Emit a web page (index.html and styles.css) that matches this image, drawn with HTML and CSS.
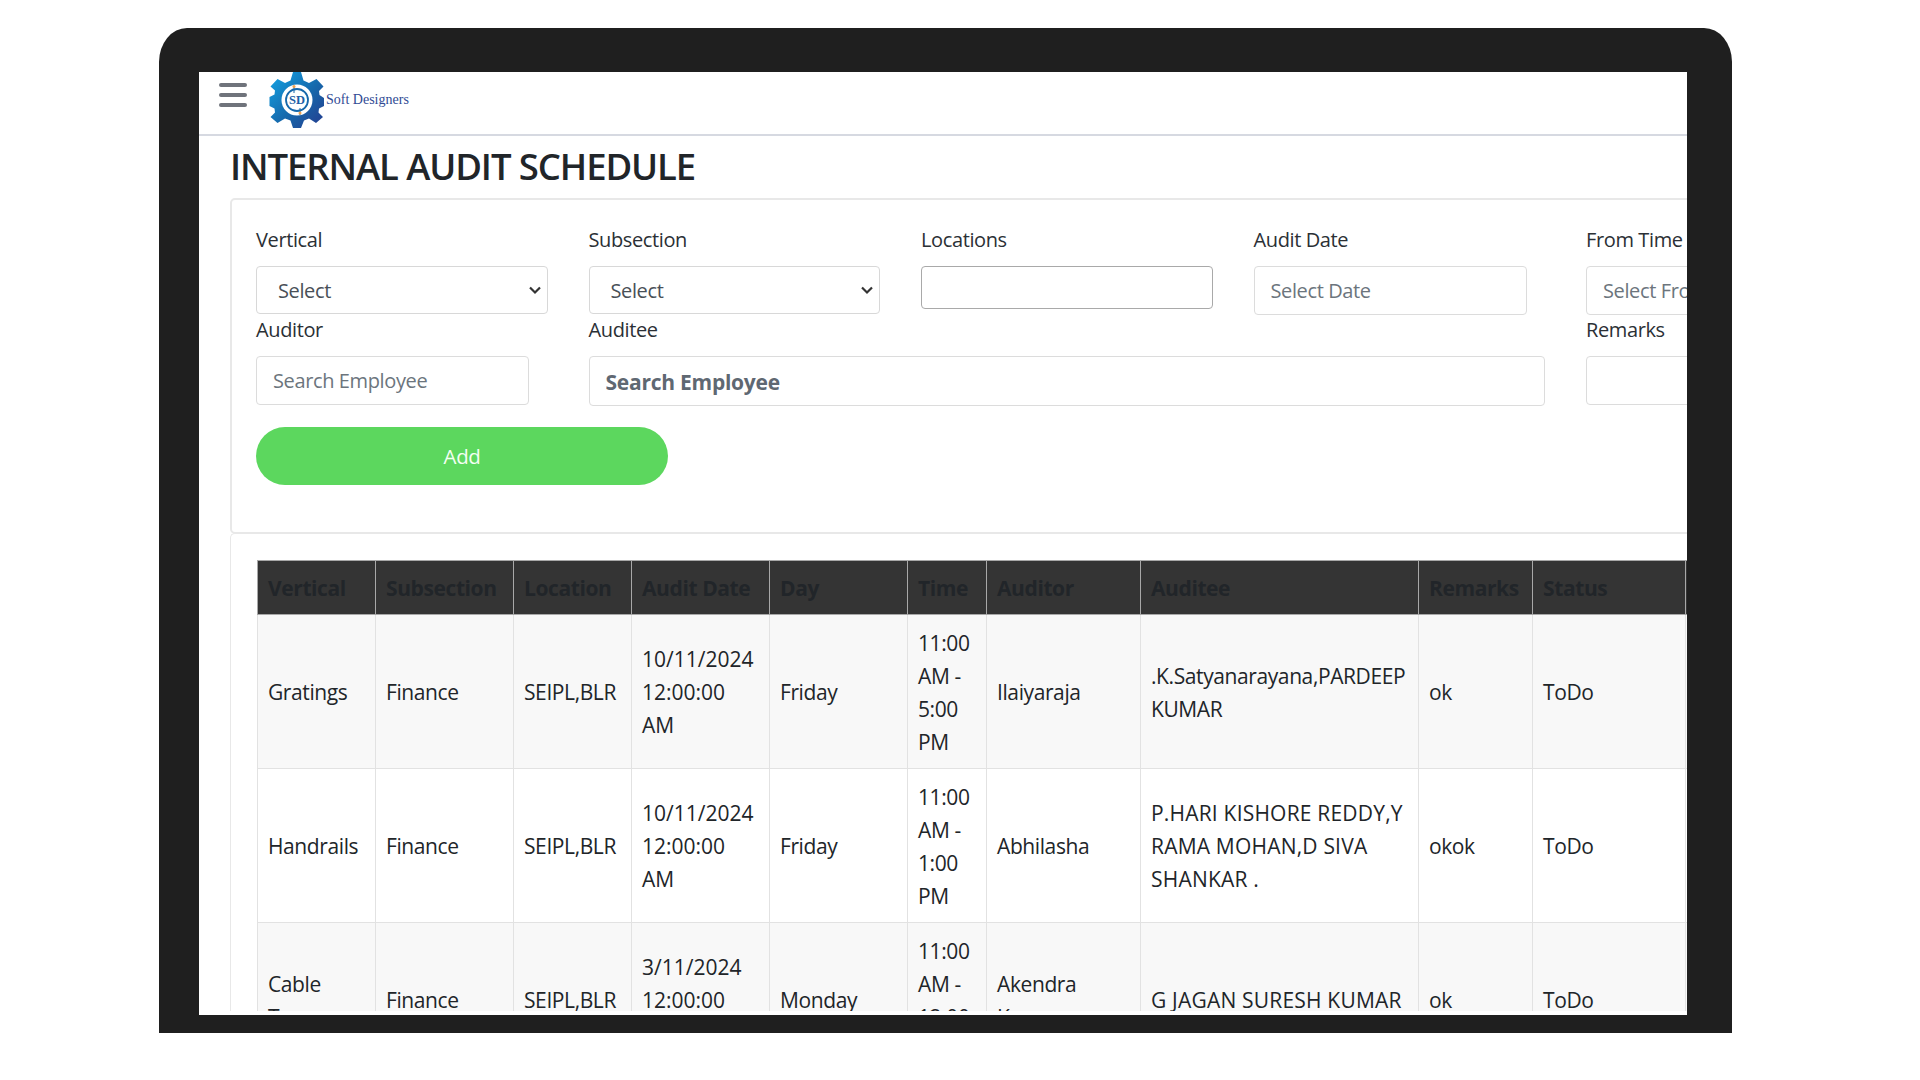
FILE: index.html
```html
<!DOCTYPE html>
<html lang="en">
<head>
<meta charset="utf-8">
<title>Internal Audit Schedule</title>
<link rel="stylesheet" href="styles.css">
</head>
<body>
<div class="device">
  <div class="screen">
    <nav class="navbar">
      <div class="burger"><span></span><span></span><span></span></div>
      <svg class="gear" viewBox="0 0 56 56" aria-hidden="true">
        <defs>
          <linearGradient id="gearFill" x1="0" y1="0" x2="1" y2="1">
            <stop offset="0" stop-color="#12a5e6"/>
            <stop offset="0.55" stop-color="#1668ab"/>
            <stop offset="1" stop-color="#253b8e"/>
          </linearGradient>
        </defs>
        <path fill="url(#gearFill)" d="M24 0H32L34.5 8.5 40 11 47.5 7 54.5 14.5 50 19 50.5 23 55 26V34L50 36.5 49.5 40.5 54 45 47 51 40 46.5 35 48.5 32 56H24L21.5 48.5 16 46.5 8.500 51 1.500 45 6 40.500 5.500 36.500 0.500 34V25L5.500 22.500 6 18.500 1.500 14.500 8.500 7 16 11 21.500 8.500Z"/>
        <circle cx="28" cy="28" r="15.500" fill="#fff"/>
        <circle cx="28" cy="28" r="11" fill="none" stroke="#1668ab" stroke-width="1.800"/>
        <path d="M25 14V21M31 36V43" stroke="#1668ab" stroke-width="1"/>
        <circle cx="25" cy="14.500" r="1.500" fill="#f0a04b"/>
        <circle cx="31" cy="41" r="1.500" fill="#f0a04b"/>
        <text x="28" y="32" class="gear-text">SD</text>
      </svg>
      <span class="brand">Soft Designers</span>
    </nav>
    <main class="content">
      <h1 class="title">INTERNAL AUDIT SCHEDULE</h1>
      <section class="card form-card">
        <form class="form-grid">
          <div class="field"><label>Vertical</label><select class="control sel"><option>Select</option></select></div>
          <div class="field"><label>Subsection</label><select class="control sel"><option>Select</option></select></div>
          <div class="field"><label>Locations</label><input class="control loc" type="text"></div>
          <div class="field narrow"><label>Audit Date</label><input class="control" placeholder="Select Date"></div>
          <div class="field"><label>From Time</label><input class="control" placeholder="Select From Time"></div>
          <div class="field narrow"><label>Auditor</label><input class="control" placeholder="Search Employee"></div>
          <div class="field wide"><label>Auditee</label><input class="control bold" placeholder="Search Employee"></div>
          <div class="field"><label>Remarks</label><input class="control" type="text"></div>
        </form>
        <button class="add" type="button">Add</button>
      </section>
      <section class="card table-card">
        <table class="grid">
          <colgroup>
            <col class="c1"><col class="c2"><col class="c3"><col class="c4"><col class="c5"><col class="c6"><col class="c7"><col class="c8"><col class="c9"><col class="c10"><col class="c11">
          </colgroup>
          <thead>
            <tr><th>Vertical</th><th>Subsection</th><th>Location</th><th>Audit Date</th><th>Day</th><th>Time</th><th>Auditor</th><th>Auditee</th><th>Remarks</th><th>Status</th><th></th></tr>
          </thead>
          <tbody>
            <tr><td>Gratings</td><td>Finance</td><td>SEIPL,BLR</td><td class="date">10/11/2024 12:00:00 AM</td><td>Friday</td><td>11:00 AM - 5:00 PM</td><td>Ilaiyaraja</td><td>.K.Satyanarayana,PARDEEP KUMAR</td><td>ok</td><td>ToDo</td><td></td></tr>
            <tr><td>Handrails</td><td>Finance</td><td>SEIPL,BLR</td><td class="date">10/11/2024 12:00:00 AM</td><td>Friday</td><td>11:00 AM - 1:00 PM</td><td>Abhilasha</td><td class="caps">P.HARI KISHORE REDDY,Y RAMA MOHAN,D SIVA SHANKAR .</td><td>okok</td><td>ToDo</td><td></td></tr>
            <tr><td>Cable Tray</td><td>Finance</td><td>SEIPL,BLR</td><td class="date">3/11/2024 12:00:00 AM</td><td>Monday</td><td>11:00 AM - 12:00 PM</td><td>Akendra Kumar</td><td class="caps">G JAGAN SURESH KUMAR</td><td>ok</td><td>ToDo</td><td></td></tr>
          </tbody>
        </table>
      </section>
    </main>
  </div>
</div>
</body>
</html>
```
FILE: styles.css
```css
* { box-sizing: border-box; }
html, body { margin: 0; height: 100%; background: #fff; overflow: hidden; }
body { font-family: "Open Sans", "Noto Sans", sans-serif; color: #212529; }

.device {
  width: 1573px;
  height: 1005px;
  margin: 28px 0 0 159px;
  padding: 44px 45px 18px 40px;
  background: #1f1f1f;
  border-radius: 28px 28px 0 0 / 34px 34px 0 0;
}
.screen {
  height: 943px;
  background: #fff;
  display: flex;
  flex-direction: column;
  padding-bottom: 4px;
  overflow: hidden;
}

.navbar {
  flex: none;
  height: 64px;
  display: flex;
  align-items: flex-start;
  border-bottom: 2px solid #d6d9e1;
}
.burger { width: 28px; margin: 11px 0 0 20px; display: flex; flex-direction: column; gap: 6px; }
.burger span { height: 4px; border-radius: 2px; background: #6f737b; }
.gear { width: 56px; height: 56px; margin-left: 22px; flex: none; }
.gear-text { font: bold 12.5px "Liberation Serif", serif; fill: #1d5fa6; text-anchor: middle; }
.brand { font: 14px/55px "Liberation Serif", serif; color: #2f4a94; margin-left: 1px; }

.content { flex: 1; min-height: 0; overflow: hidden; padding-left: 31px; }
.title { margin: 8px 0 10px; font-size: 36.5px; line-height: 44px; font-weight: 600; letter-spacing: -1.1px; white-space: nowrap; }

.card { width: 1700px; background: #fff; border: 1px solid #e8e8e8; border-radius: 5px; }
.form-card { height: 336px; padding: 28px 24px 0; border-width: 2px; }
.table-card { padding: 26px 26px 0; margin-top: -1px; border-right: 0; }

.form-grid {
  display: grid;
  grid-template-columns: repeat(5, 291.5px);
  column-gap: 41px;
  align-items: start;
}
.field { display: flex; flex-direction: column; height: 90px; }
.field label { font-size: 20px; line-height: 24px; letter-spacing: -0.38px; height: 38px; white-space: nowrap; color: #2b3035; }
.field.narrow .control { width: 273px; }
.field.wide { grid-column: span 3; }
.control {
  width: 100%;
  height: 49px;
  padding: 0 16px;
  border: 1px solid #dcdcdc;
  border-radius: 4px;
  background: #fff;
  font: 20px "Open Sans", sans-serif;
  letter-spacing: -0.38px;
  color: #495057;
  outline: none;
}
.control::placeholder { color: #6c757d; opacity: 1; }
.sel {
  height: 48px;
  padding-left: 21px;
  border-color: #d8d8d8;
  appearance: none;
  background: #fff url("data:image/svg+xml,%3Csvg xmlns='http://www.w3.org/2000/svg' viewBox='0 0 14 10'%3E%3Cpath d='M2 2.500l5 5 5-5' fill='none' stroke='%23333' stroke-width='2.200'/%3E%3C/svg%3E") no-repeat right 5px center / 14px 10px;
}
.loc { height: 43px; border-color: #a9a9a9; }
.bold { height: 50px; padding-top: 1px; font-size: 21px; font-weight: 700; letter-spacing: -0.25px; }
.bold::placeholder { color: #5f6872; }

.add {
  display: block;
  width: 412px;
  height: 58px;
  margin-top: 19px;
  border: 0;
  border-radius: 29px;
  background: #5cd75e;
  color: #f3fff3;
  font: 500 20.5px "Open Sans", sans-serif;
  letter-spacing: -0.4px;
}

.grid { table-layout: fixed; width: 1430px; border-collapse: collapse; font-size: 21px; line-height: 33px; letter-spacing: -0.4px; }
.c1 { width: 118px; } .c2 { width: 138px; } .c3 { width: 118px; } .c4 { width: 138px; } .c5 { width: 138px; }
.c6 { width: 79px; } .c7 { width: 154px; } .c8 { width: 278px; } .c9 { width: 114px; } .c10 { width: 153px; } .c11 { width: 2px; }
th { height: 54px; padding: 1px 10px 0; background: #343434; border: 1px solid #a8a8a8; color: #212529; font-weight: 700; text-align: left; white-space: nowrap; overflow: hidden; }
td { height: 154px; padding: 11px 10px 9px; border: 1px solid #e2e2e2; vertical-align: middle; }
td.date { letter-spacing: 0; }
td.caps { letter-spacing: 0.2px; }
tbody tr:nth-child(odd) td { background: #f8f8f8; }
```
